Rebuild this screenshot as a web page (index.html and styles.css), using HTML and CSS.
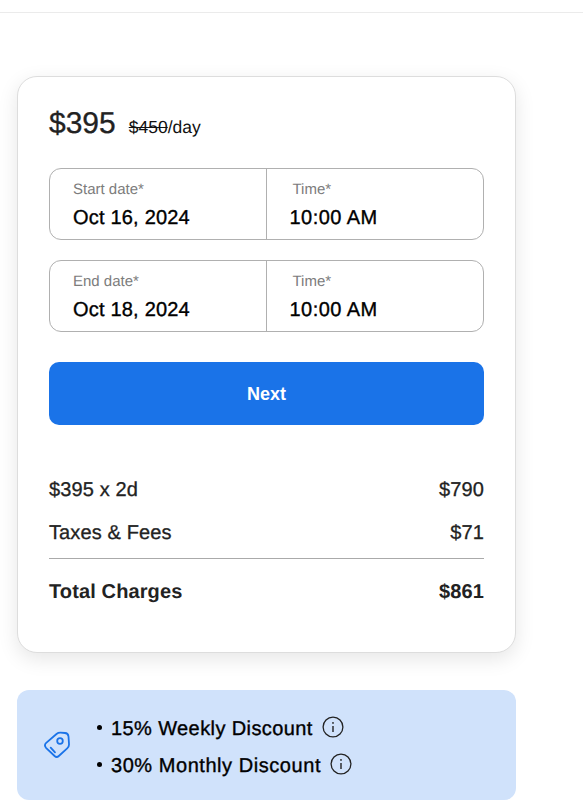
FILE: index.html
```html
<!DOCTYPE html>
<html lang="en">
<head>
<meta charset="utf-8">
<title>Booking</title>
<link rel="stylesheet" href="styles.css">
</head>
<body>
<div class="topbar"></div>
<main class="column">
  <section class="card">
    <div class="price">
      <span class="price-now">$395</span>
      <span class="price-old"><s>$450</s>/day</span>
    </div>
    <div class="field">
      <div class="cell cell-date"><span class="label">Start date*</span><span class="value">Oct 16, 2024</span></div>
      <div class="cell cell-time"><span class="label">Time*</span><span class="value">10:00 AM</span></div>
    </div>
    <div class="field">
      <div class="cell cell-date"><span class="label">End date*</span><span class="value">Oct 18, 2024</span></div>
      <div class="cell cell-time"><span class="label">Time*</span><span class="value">10:00 AM</span></div>
    </div>
    <button class="next" type="button">Next</button>
    <div class="row row-first"><span>$395 x 2d</span><span>$790</span></div>
    <div class="row row-second"><span>Taxes &amp; Fees</span><span>$71</span></div>
    <div class="row row-total"><span>Total Charges</span><span>$861</span></div>
  </section>
  <section class="promo">
    <svg class="tag" viewBox="0 0 28 28" width="28" height="28" fill="none" stroke="#1a73e8" stroke-width="1.8" stroke-linecap="round" stroke-linejoin="round">
      <path d="M3.2 11.9L13.5 3Q15.3 1.6 17.5 1.7L22 2Q25.2 2.2 25.5 5.5L26 13Q26.2 15.6 24.2 17.4L15.8 25Q13.7 26.9 11.6 25L3 16.8Q.8 14 3.2 11.9z"/>
      <circle cx="17" cy="10" r="2.8"/>
      <path d="M7.7 16.7l4.3 4.6"/>
    </svg>
    <ul class="discounts">
      <li><span class="dot"></span>15% Weekly Discount<svg class="info" viewBox="0 0 22 22" width="22" height="22" fill="none" stroke="#222" stroke-width="1.3"><circle cx="11" cy="11" r="9.9"/><path d="M11 10v6" stroke-width="1.4"/><circle cx="11" cy="6.9" r=".9" fill="#222" stroke="none"/></svg></li>
      <li class="wide"><span class="dot"></span>30% Monthly Discount<svg class="info" viewBox="0 0 22 22" width="22" height="22" fill="none" stroke="#222" stroke-width="1.3"><circle cx="11" cy="11" r="9.9"/><path d="M11 10v6" stroke-width="1.4"/><circle cx="11" cy="6.9" r=".9" fill="#222" stroke="none"/></svg></li>
    </ul>
  </section>
</main>
</body>
</html>
```
FILE: styles.css
```css
* { box-sizing: border-box; }
html, body { margin: 0; background: #fff; }
body {
  font-family: "Liberation Sans", Arial, sans-serif;
  color: #222;
  height: 802px;
  overflow: hidden;
  text-rendering: geometricPrecision;
}
.topbar { height: 13px; border-bottom: 1px solid #ebebeb; }
.column { width: 499px; margin: 63px 0 0 17px; }
.card {
  height: 577px;
  padding: 22px 31px 0;
  background: #fff;
  border: 1px solid #ddd;
  border-radius: 20px;
  box-shadow: 0 6px 20px rgba(0,0,0,.1);
}
.price { display: flex; align-items: baseline; gap: 13px; height: 47px; padding-top: 1px; }
.price-now { font-size: 30px; line-height: 47px; color: #222; -webkit-text-stroke: .3px #222; }
.price-old { font-size: 17.5px; color: #111; }
.field {
  display: flex;
  height: 72px;
  margin-top: 20px;
  border: 1px solid #b0b0b0;
  border-radius: 12px;
}
.price + .field { margin-top: 22px; }
.cell { flex: 1 1 50%; display: flex; flex-direction: column; }
.cell-date { padding: 12px 0 0 23px; border-right: 1px solid #b0b0b0; }
.cell-time { padding: 12px 0 0 26px; }
.label { font-size: 15px; line-height: 17px; color: #7c7c7c; }
.value { font-size: 20px; line-height: 24px; margin-top: 8px; color: #000; -webkit-text-stroke: .35px #000; letter-spacing: .2px; }
.cell-time .value { margin-left: -3px; letter-spacing: .45px; }
.next {
  display: block;
  width: 100%;
  height: 63px;
  margin-top: 30px;
  padding-top: 2px;
  border: 0;
  border-radius: 10px;
  background: #1a73e8;
  color: #fff;
  font: bold 18px "Liberation Sans", Arial, sans-serif;
}
.row { display: flex; justify-content: space-between; font-size: 20px; line-height: 24px; color: #222; -webkit-text-stroke: .3px #222; letter-spacing: .12px; }
.row-first { margin-top: 53px; }
.row-second { margin-top: 19px; padding-bottom: 13px; border-bottom: 1px solid #aaa; height: 38px; }
.row-total { margin-top: 21px; font-weight: bold; -webkit-text-stroke: 0; }
.promo {
  display: flex;
  align-items: center;
  height: 110px;
  margin-top: 37px;
  padding-left: 26px;
  background: #d0e2fb;
  border-radius: 12px;
}
.tag { flex: none; }
.discounts { list-style: none; margin: 0 0 0 26px; padding: 0; position: relative; top: 3px; }
.discounts li { display: flex; align-items: center; height: 37px; font-size: 20px; color: #000; -webkit-text-stroke: .35px #000; white-space: nowrap; letter-spacing: .4px; }
.discounts .wide { letter-spacing: .55px; }
.dot { width: 5px; height: 5px; border-radius: 50%; background: #000; margin-right: 9px; position: relative; top: -2px; }
.info { margin-left: 9px; position: relative; top: -3px; }
```
